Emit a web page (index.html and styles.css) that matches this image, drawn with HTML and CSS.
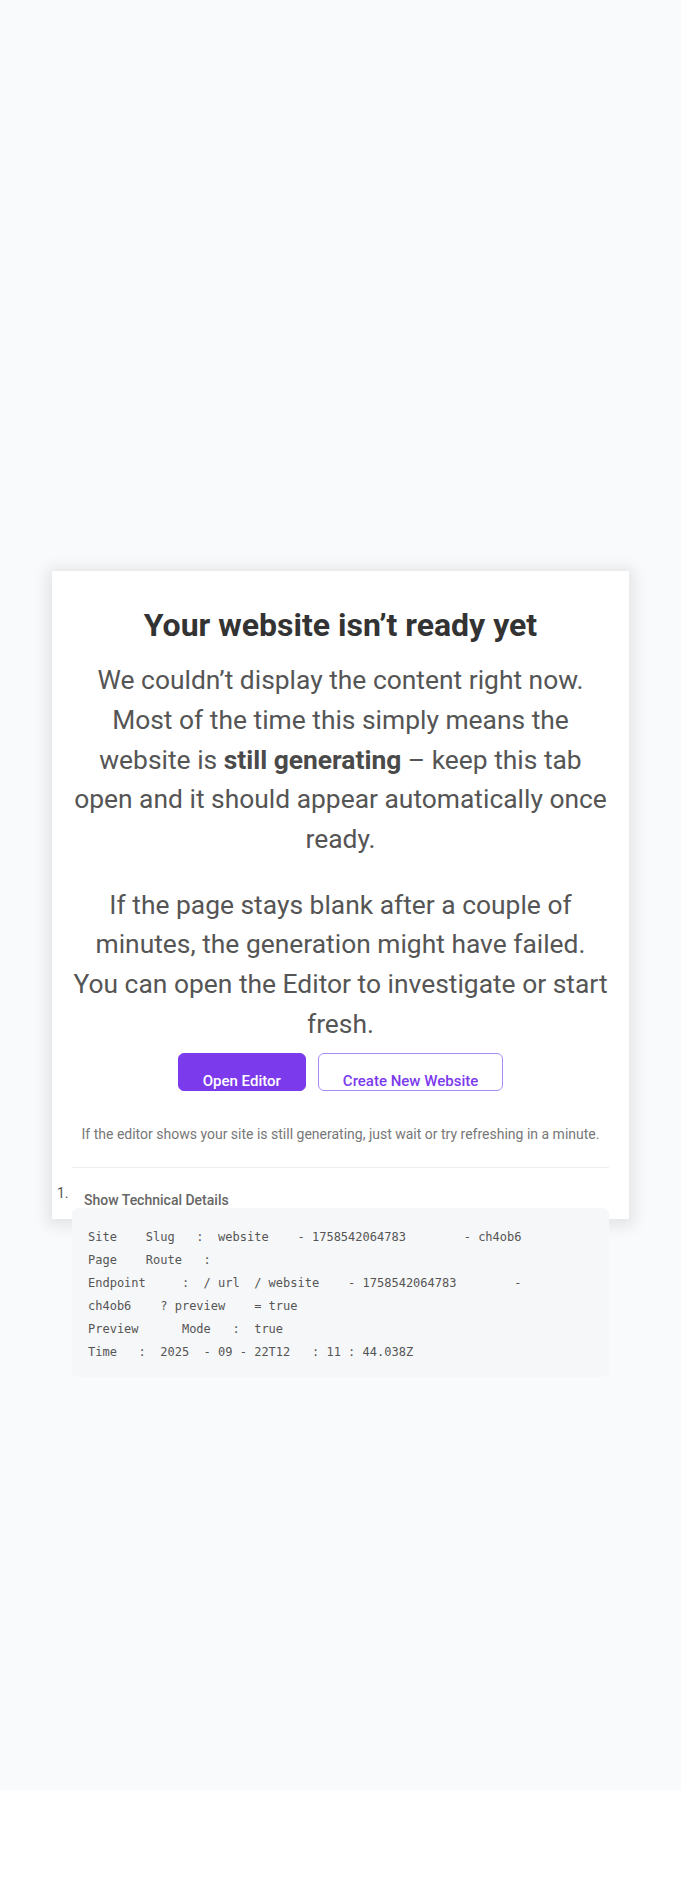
FILE: index.html
```html
<!DOCTYPE html>
<html lang="en">
<head>
<meta charset="utf-8">
<title>Your website isn't ready yet</title>
<link rel="stylesheet" href="styles.css">
</head>
<body>
<div class="page">
  <div class="card">
    <h1 class="title">Your website isn’t ready yet</h1>
    <p class="lead">We couldn’t display the content right now. Most of the time this simply means the website is <strong>still generating</strong> – keep this tab open and it should appear automatically once ready.</p>
    <p class="lead lead-last">If the page stays blank after a couple of minutes, the generation might have failed. You can open the Editor to investigate or start fresh.</p>
    <div class="actions">
      <a class="btn btn-primary" href="#">Open Editor</a>
      <a class="btn btn-outline" href="#">Create New Website</a>
    </div>
    <p class="note">If the editor shows your site is still generating, just wait or try refreshing in a minute.</p>
    <hr class="divider">
    <ol class="tech">
      <li class="tech-item">
        <div class="tech-head"><span class="tech-num">1.</span><span class="tech-summary">Show Technical Details</span></div>
<pre class="tech-pre">Site    Slug   :  website    - 1758542064783        - ch4ob6
Page    Route   :
Endpoint     :  / url  / website    - 1758542064783        -
ch4ob6    ? preview    = true
Preview      Mode   :  true
Time   :  2025  - 09 - 22T12   : 11 : 44.038Z</pre>
      </li>
    </ol>
  </div>
</div>
</body>
</html>
```
FILE: styles.css
```css
html, body {
  margin: 0;
  padding: 0;
  background: #ffffff;
}

body {
  font-family: Roboto, "Liberation Sans", Arial, sans-serif;
  color: #555555;
}

.page {
  height: 1790px;
  background: #f9fafb;
  display: flex;
  align-items: center;
  justify-content: center;
}

.card {
  box-sizing: border-box;
  width: 577px;
  height: 648px;
  padding: 35px 20px 0;
  background: #ffffff;
  box-shadow: 0 2px 14px 5px rgba(0, 0, 0, 0.09);
  text-align: center;
}

.title {
  margin: 0 0 17px;
  font-size: 32px;
  line-height: 1.2;
  font-weight: 700;
  color: #333333;
}

.lead {
  margin: 0 0 26.4px;
  font-size: 26.4px;
  line-height: 1.5;
  color: #555555;
}

.lead strong {
  font-weight: 700;
  color: #4a4a4a;
}

.lead-last {
  margin-bottom: 0;
}

.actions {
  display: flex;
  justify-content: center;
  gap: 12px;
  margin-top: 9px;
}

.btn {
  box-sizing: border-box;
  height: 38px;
  padding: 18px 24px 0;
  border-radius: 6px;
  font-size: 15px;
  font-weight: 500;
  line-height: normal;
  text-decoration: none;
}

.btn-primary {
  background: #7c3aed;
  color: #ffffff;
  border: 1px solid #7c3aed;
}

.btn-outline {
  background: #ffffff;
  color: #7c3aed;
  border: 1px solid #a78bfa;
}

.note {
  margin: 33px 0 0;
  font-size: 14px;
  line-height: 20px;
  color: #777777;
}

.divider {
  margin: 23px 0 0;
  border: 0;
  border-top: 1px solid #eeeeee;
  height: 0;
}

.tech {
  margin: 17px 0 0;
  padding: 0;
  list-style: none;
  text-align: left;
}

.tech-head {
  display: flex;
  align-items: flex-start;
  margin-left: -15px;
}

.tech-num {
  width: 27px;
  font-size: 14px;
  color: #555555;
}

.tech-summary {
  padding-top: 7px;
  font-size: 14px;
  font-weight: 500;
  color: #666666;
}

.tech-pre {
  margin: 0;
  padding: 18px 16px 13px;
  background: #f6f7f9;
  border-radius: 6px;
  font-family: "DejaVu Sans Mono", "Liberation Mono", monospace;
  font-size: 12px;
  line-height: 23px;
  color: #555555;
  white-space: pre;
}
```
